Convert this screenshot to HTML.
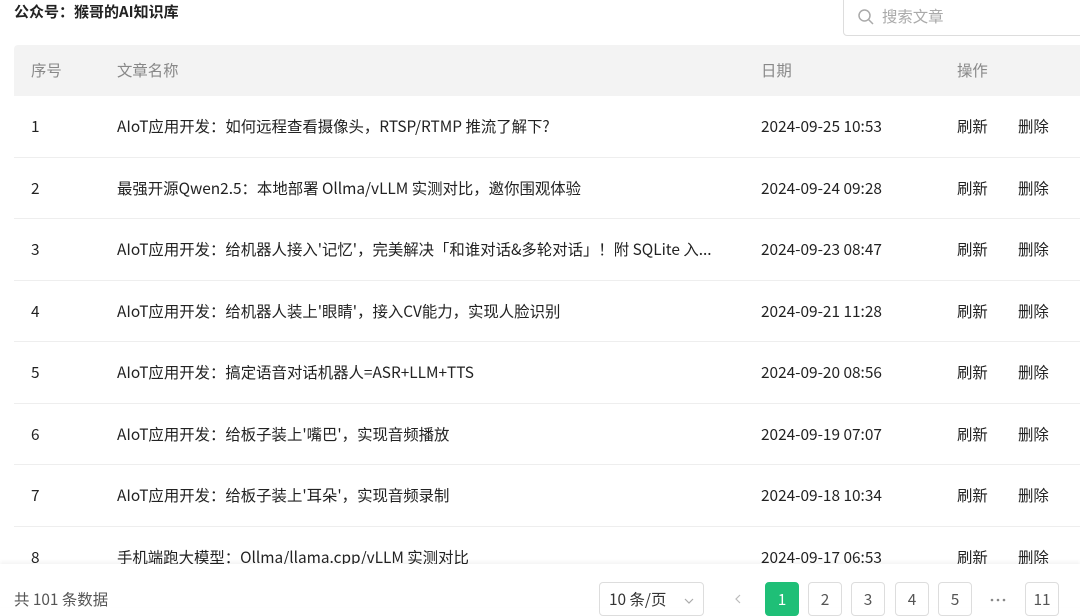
<!DOCTYPE html>
<html><head><meta charset="utf-8"><style>
*{margin:0;padding:0;box-sizing:border-box}
body{width:1080px;height:607px;overflow:hidden;background:#fff;font-family:"Noto Sans CJK SC","Liberation Sans",sans-serif;color:#333;position:relative}
.title{position:absolute;left:14px;top:1px;font-size:15px;font-weight:bold;color:#222;line-height:22px}
.search{position:absolute;left:843px;top:-4px;width:260px;height:40px;border:1px solid #ddd;border-radius:4px;font-size:15.4px;color:#aaa;padding:8px 0 0 38px;line-height:22px}
.search svg{position:absolute;left:13px;top:11px}
.table{position:absolute;left:14px;top:45px;width:1080px}
.row{height:61.5px;position:relative;font-size:15.4px;color:#222;border-bottom:1px solid #eee}
.row span{position:absolute;top:0;line-height:60px;white-space:nowrap}
.head{height:51px;background:#f3f3f3;border-radius:4px 0 0 0;color:#888;border:none}
.head span{line-height:51px}
.c1{left:17px}.c2{left:103px}.c3{left:747px}.c4{left:943px}.c5{left:1004px}
.footer{position:absolute;left:0;top:564px;width:1080px;height:43px;background:#fff;box-shadow:0 -2px 4px rgba(0,0,0,0.05)}
.total{position:absolute;left:14px;top:24px;font-size:15.4px;color:#555;line-height:22px}
.sel{position:absolute;left:599px;top:18px;width:105px;height:34px;border:1px solid #ddd;border-radius:4px;font-size:15.4px;color:#333;padding:5px 0 0 9px;line-height:22px}
.pg{position:absolute;top:18px;width:34px;height:34px;border:1px solid #ddd;border-radius:4px;font-size:15.4px;text-align:center;padding-top:5px;line-height:22px;color:#555}
.pg.a{background:#1fbf77;border-color:#1fbf77;color:#fff}
</style></head><body>
<div class="title">公众号：猴哥的AI知识库</div>
<div class="search"><svg width="18" height="18" viewBox="0 0 18 18"><circle cx="7.5" cy="7.5" r="5.5" fill="none" stroke="#aaa" stroke-width="1.5"/><path d="M11.5 11.5L16 16" stroke="#aaa" stroke-width="1.5"/></svg>搜索文章</div>
<div class="table">
<div class="row head"><span class="c1">序号</span><span class="c2">文章名称</span><span class="c3">日期</span><span class="c4">操作</span></div>
<div class="row"><span class="c1">1</span><span class="c2">AIoT应用开发：如何远程查看摄像头，RTSP/RTMP 推流了解下?</span><span class="c3">2024-09-25 10:53</span><span class="c4">刷新</span><span class="c5">删除</span></div>
<div class="row"><span class="c1">2</span><span class="c2">最强开源Qwen2.5：本地部署 Ollma/vLLM 实测对比，邀你围观体验</span><span class="c3">2024-09-24 09:28</span><span class="c4">刷新</span><span class="c5">删除</span></div>
<div class="row"><span class="c1">3</span><span class="c2">AIoT应用开发：给机器人接入'记忆'，完美解决「和谁对话&amp;多轮对话」！附 SQLite 入...</span><span class="c3">2024-09-23 08:47</span><span class="c4">刷新</span><span class="c5">删除</span></div>
<div class="row"><span class="c1">4</span><span class="c2">AIoT应用开发：给机器人装上'眼睛'，接入CV能力，实现人脸识别</span><span class="c3">2024-09-21 11:28</span><span class="c4">刷新</span><span class="c5">删除</span></div>
<div class="row"><span class="c1">5</span><span class="c2">AIoT应用开发：搞定语音对话机器人=ASR+LLM+TTS</span><span class="c3">2024-09-20 08:56</span><span class="c4">刷新</span><span class="c5">删除</span></div>
<div class="row"><span class="c1">6</span><span class="c2">AIoT应用开发：给板子装上'嘴巴'，实现音频播放</span><span class="c3">2024-09-19 07:07</span><span class="c4">刷新</span><span class="c5">删除</span></div>
<div class="row"><span class="c1">7</span><span class="c2">AIoT应用开发：给板子装上'耳朵'，实现音频录制</span><span class="c3">2024-09-18 10:34</span><span class="c4">刷新</span><span class="c5">删除</span></div>
<div class="row"><span class="c1">8</span><span class="c2">手机端跑大模型：Ollma/llama.cpp/vLLM 实测对比</span><span class="c3">2024-09-17 06:53</span><span class="c4">刷新</span><span class="c5">删除</span></div>
</div>
<div class="footer">
<div class="total">共 101 条数据</div>
<div class="sel">10 条/页 <svg width="10" height="6" viewBox="0 0 10 6" style="margin-left:14px;vertical-align:middle"><path d="M1 1l4 4 4-4" fill="none" stroke="#aaa" stroke-width="1.2"/></svg></div>
<svg style="position:absolute;left:735px;top:30px" width="6" height="10" viewBox="0 0 6 10"><path d="M5 1L1 5l4 4" fill="none" stroke="#bbb" stroke-width="1.2"/></svg>
<div class="pg a" style="left:765px">1</div>
<div class="pg" style="left:808px">2</div>
<div class="pg" style="left:851px">3</div>
<div class="pg" style="left:895px">4</div>
<div class="pg" style="left:938px">5</div>
<svg style="position:absolute;left:990px;top:34px" width="16" height="4" viewBox="0 0 16 4"><circle cx="2" cy="2" r="1.3" fill="#888"/><circle cx="8" cy="2" r="1.3" fill="#888"/><circle cx="14" cy="2" r="1.3" fill="#888"/></svg>
<div class="pg" style="left:1025px">11</div>
</div>
</body></html>
